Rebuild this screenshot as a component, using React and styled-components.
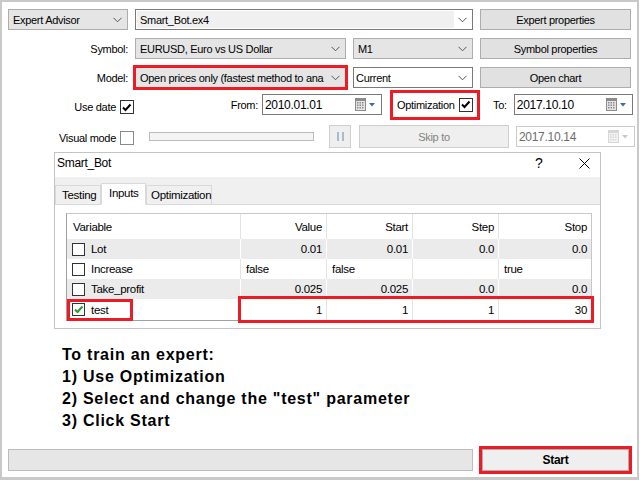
import styled, { createGlobalStyle } from "styled-components";

const RED = "#ed1c24";

const GlobalStyle = createGlobalStyle`
  body {
    margin: 0;
    background: #fff;
    font-family: "Liberation Sans", Arial, sans-serif;
    font-size: 11px;
    letter-spacing: -0.3px;
    color: #000;
  }
`;

const Window = styled.div`
  width: 639px;
  height: 480px;
  box-sizing: border-box;
  border: 2px solid #c9c9c9;
  border-bottom-width: 3px;
  background: #fff;
  padding: 7px 0 0 6px;
  display: flex;
  flex-direction: column;
`;

const Row = styled.div`
  display: flex;
  align-items: center;
  height: ${(p) => p.$h || 21}px;
  margin-top: ${(p) => p.$mt || 0}px;
`;

const Spacer = styled.div`
  flex: none;
  width: ${(p) => p.$w}px;
`;

const Label = styled.div`
  flex: none;
  width: ${(p) => p.$w}px;
  text-align: right;
  white-space: nowrap;
`;

const Combo = styled.div`
  flex: none;
  position: relative;
  box-sizing: border-box;
  width: ${(p) => p.$w}px;
  height: 21px;
  display: flex;
  align-items: center;
  padding-left: ${(p) => (p.$edit ? 2 : 4)}px;
  background: ${(p) => (p.$edit ? "#fff" : "#e5e5e5")};
  border: 1px solid ${(p) => (p.$edit ? "#7a7a7a" : "#adadad")};
  white-space: nowrap;
  ${(p) => p.$marked && `outline: 3px solid ${RED}; outline-offset: -1px;`}
`;

const ComboText = styled.div`
  flex: 1;
  margin-right: 20px;
  overflow: hidden;
  white-space: nowrap;
`;

const EditText = styled.div`
  flex: 1;
  align-self: stretch;
  margin: 1px 18px 1px -1px;
  padding-left: 3px;
  display: flex;
  align-items: center;
  background: #f0f0f0;
`;

const ChevronBox = styled.div`
  width: 20px;
  display: flex;
  justify-content: center;
  position: absolute;
  right: 0;
  top: 7px;
`;

const Button = styled.div`
  flex: none;
  box-sizing: border-box;
  width: ${(p) => p.$w}px;
  height: ${(p) => p.$h || 21}px;
  display: flex;
  align-items: center;
  justify-content: center;
  background: ${(p) => (p.$disabled || p.$bold ? "#efefef" : "#e1e1e1")};
  border: 1px solid ${(p) => (p.$disabled ? "#cfcfcf" : "#adadad")};
  color: ${(p) => (p.$disabled ? "#838383" : "#000")};
  font-weight: ${(p) => (p.$bold ? 700 : 400)};
  font-size: ${(p) => (p.$bold ? "12px" : "11px")};
  ${(p) => p.$marked && `outline: 3px solid ${RED}; outline-offset: 0;`}
`;

const CheckWrap = styled.div`
  flex: none;
  width: ${(p) => p.$w}px;
  display: flex;
  align-items: center;
  justify-content: flex-end;
  gap: 4px;
  margin-top: ${(p) => p.$dy || 0}px;
`;

const Box = styled.div`
  flex: none;
  box-sizing: border-box;
  width: ${(p) => p.$size || 14}px;
  height: ${(p) => p.$size || 14}px;
  background: #fff;
  border: 1px solid ${(p) => p.$border || "#333"};
  display: flex;
  align-items: center;
  justify-content: center;
`;

const DateField = styled.div`
  flex: none;
  box-sizing: border-box;
  width: ${(p) => p.$w}px;
  height: 21px;
  display: flex;
  align-items: center;
  padding: 0 4px 0 2px;
  background: #fff;
  border: 1px solid ${(p) => (p.$disabled ? "#cccccc" : "#7a7a7a")};
  color: ${(p) => (p.$disabled ? "#6d6d6d" : "#000")};
  font-size: 12px;
`;

const DateText = styled.div`
  flex: 1;
`;

const OptBox = styled.div`
  flex: none;
  box-sizing: border-box;
  width: 90px;
  height: 30px;
  border: 3px solid ${RED};
  display: flex;
  align-items: center;
  padding-left: 4px;
  gap: 4px;
`;

const Track = styled.div`
  flex: none;
  box-sizing: border-box;
  width: 165px;
  height: 9px;
  background: #f4f4f4;
  border: 1px solid #bcbcbc;
`;

const PauseBars = styled.div`
  display: flex;
  gap: 3px;
  span {
    width: 2px;
    height: 9px;
    background: #a9bccf;
  }
`;

/* dialog */

const Dialog = styled.div`
  margin: 4px 0 0 46px;
  width: 547px;
  height: 177px;
  box-sizing: border-box;
  border: 1px solid #c4c4c4;
  display: flex;
  flex-direction: column;
`;

const TitleBar = styled.div`
  height: 24px;
  display: flex;
  align-items: flex-start;
  padding: 3px 0 0 2px;
  box-sizing: border-box;
  font-size: 12px;
`;

const Title = styled.div`
  flex: 1;
`;

const Help = styled.div`
  width: 14px;
  margin-right: 30px;
  font-size: 14px;
  line-height: 14px;
`;

const Close = styled.div`
  width: 11px;
  margin: 2px 10px 0 0;
`;

const TabStrip = styled.div`
  height: 28px;
  background: #f0f0f0;
  border-bottom: 1px solid #d9d9d9;
  display: flex;
  align-items: flex-end;
  box-sizing: border-box;
`;

const Tab = styled.div`
  flex: none;
  box-sizing: border-box;
  width: ${(p) => p.$w}px;
  height: ${(p) => (p.$active ? 22 : 19)}px;
  padding-left: ${(p) => p.$pad}px;
  display: flex;
  align-items: ${(p) => (p.$active ? "flex-start" : "center")};
  padding-top: ${(p) => (p.$active ? 3 : 0)}px;
  background: ${(p) => (p.$active ? "#fff" : "#f0f0f0")};
  border: 1px solid #d9d9d9;
  border-bottom: ${(p) => (p.$active ? "1px solid #fff" : "none")};
  margin-bottom: ${(p) => (p.$active ? -1 : 0)}px;
  font-size: 11.5px;
`;

const Panel = styled.div`
  flex: 1;
  padding: 8px 0 0 11px;
`;

const Table = styled.div`
  width: 526px;
  box-sizing: border-box;
  border: 1px solid #a0a0a0;
  border-top-color: #c8c8c8;
  border-right-color: #c8c8c8;
  font-size: 11.5px;
`;

const TRow = styled.div`
  display: flex;
  height: ${(p) => p.$h || 20}px;
  background: ${(p) => (p.$shade ? "#ebebeb" : "#fff")};
`;

const Cell = styled.div`
  flex: none;
  box-sizing: border-box;
  width: ${(p) => p.$w}px;
  display: flex;
  align-items: center;
  justify-content: ${(p) => (p.$left ? "flex-start" : "flex-end")};
  padding: ${(p) => (p.$left ? "0 0 0 5px" : "0 4px 0 0")};
  border-right: 1px solid ${(p) => (p.$shade ? "#fff" : "#e3e3e3")};
  &:last-child {
    border-right: none;
  }
`;

const VarCell = styled.div`
  flex: none;
  box-sizing: border-box;
  width: 174px;
  display: flex;
  align-items: center;
  padding-left: ${(p) => (p.$head ? 6 : 5)}px;
  border-right: 1px solid ${(p) => (p.$shade ? "#fff" : "#e3e3e3")};
`;

const VarName = styled.div`
  display: flex;
  align-items: center;
  gap: 6px;
  height: 16px;
  padding-right: 10px;
  ${(p) => p.$marked && `outline: 3px solid ${RED}; outline-offset: 0; margin-left: -2px; padding-left: 2px; width: 48px;`}
`;

const ValueGroup = styled.div`
  display: flex;
  ${(p) => p.$marked && `outline: 3px solid ${RED}; outline-offset: 0;`}
`;

/* instructions and footer */

const Steps = styled.div`
  margin: 15px 0 0 54px;
  font-size: 16px;
  font-weight: 700;
  line-height: 22px;
  letter-spacing: 0.75px;
`;

const Footer = styled.div`
  display: flex;
  align-items: center;
  margin-top: 17px;
  gap: 9px;
`;

const Progress = styled.div`
  box-sizing: border-box;
  width: 465px;
  height: 22px;
  background: #e6e6e6;
  border: 1px solid #bcbcbc;
`;

function Chevron({ color = "#555" }) {
  return (
    <svg width="9" height="6" viewBox="0 0 9 6">
      <path d="M0.5 0.8 L4.5 4.8 L8.5 0.8" fill="none" stroke={color} strokeWidth="1" />
    </svg>
  );
}

function Tick({ color = "#000" }) {
  return (
    <svg width="10" height="9" viewBox="0 0 10 9">
      <path d="M1 4.5 L3.5 7 L8.5 1.5" fill="none" stroke={color} strokeWidth="2" />
    </svg>
  );
}

function Calendar({ disabled }) {
  const grid = disabled ? "#d6d6d6" : "#8c8c8c";
  const arrow = disabled ? "#c8c8c8" : "#3b6db0";
  return (
    <svg width="22" height="13" viewBox="0 0 22 13">
      <rect x="0.5" y="0.5" width="10" height="12" fill={disabled ? "#f4f4f4" : "#e4e4e4"} stroke={grid} />
      <rect x="1" y="1" width="9" height="2" fill={grid} />
      {[4, 6.5, 9].map((y) =>
        [2, 4.5, 7].map((x) => <rect key={`${x}-${y}`} x={x} y={y} width="1.5" height="1.5" fill={grid} />)
      )}
      <path d="M14 5 L20 5 L17 8.5 Z" fill={arrow} />
    </svg>
  );
}

function CloseIcon() {
  return (
    <svg width="11" height="11" viewBox="0 0 11 11">
      <path d="M0.5 0.5 L10.5 10.5 M10.5 0.5 L0.5 10.5" stroke="#000" strokeWidth="1" />
    </svg>
  );
}

const inputs = [
  { name: "Lot", value: "0.01", start: "0.01", step: "0.0", stop: "0.0" },
  { name: "Increase", value: "false", start: "false", step: "", stop: "true", text: true },
  { name: "Take_profit", value: "0.025", start: "0.025", step: "0.0", stop: "0.0" },
  { name: "test", value: "1", start: "1", step: "1", stop: "30", on: true },
];

export default function App() {
  return (
    <>
      <GlobalStyle />
      <Window>
        <Row>
          <Combo $w={120}>
            <ComboText>Expert Advisor</ComboText>
            <ChevronBox><Chevron /></ChevronBox>
          </Combo>
          <Spacer $w={7} />
          <Combo $w={338} $edit>
            <EditText>Smart_Bot.ex4</EditText>
            <ChevronBox><Chevron /></ChevronBox>
          </Combo>
          <Spacer $w={7} />
          <Button $w={151}>Expert properties</Button>
        </Row>

        <Row $mt={8}>
          <Label $w={120}>Symbol:</Label>
          <Spacer $w={7} />
          <Combo $w={211}>
            <ComboText>EURUSD, Euro vs US Dollar</ComboText>
            <ChevronBox><Chevron /></ChevronBox>
          </Combo>
          <Spacer $w={7} />
          <Combo $w={120}>
            <ComboText>M1</ComboText>
            <ChevronBox><Chevron /></ChevronBox>
          </Combo>
          <Spacer $w={7} />
          <Button $w={151}>Symbol properties</Button>
        </Row>

        <Row $mt={8}>
          <Label $w={120}>Model:</Label>
          <Spacer $w={7} />
          <Combo $w={211} $marked>
            <ComboText>Open prices only (fastest method to ana</ComboText>
            <ChevronBox><Chevron /></ChevronBox>
          </Combo>
          <Spacer $w={7} />
          <Combo $w={120} $edit>
            <ComboText>Current</ComboText>
            <ChevronBox><Chevron /></ChevronBox>
          </Combo>
          <Spacer $w={7} />
          <Button $w={151}>Open chart</Button>
        </Row>

        <Row $mt={1} $h={31}>
          <CheckWrap $w={126} $dy={5}>
            <span>Use date</span>
            <Box><Tick /></Box>
          </CheckWrap>
          <Label $w={124}>From:</Label>
          <Spacer $w={4} />
          <DateField $w={120}>
            <DateText>2010.01.01</DateText>
            <Calendar />
          </DateField>
          <Spacer $w={8} />
          <OptBox>
            <span>Optimization</span>
            <Box><Tick /></Box>
          </OptBox>
          <Spacer $w={13} />
          <span>To:</span>
          <Spacer $w={7} />
          <DateField $w={119}>
            <DateText>2017.10.10</DateText>
            <Calendar />
          </DateField>
        </Row>

        <Row $mt={5} $h={23}>
          <CheckWrap $w={126} $dy={2}>
            <span>Visual mode</span>
            <Box $border="#8a8a8a" />
          </CheckWrap>
          <Spacer $w={15} />
          <Track />
          <Spacer $w={15} />
          <Button $w={22} $h={23} $disabled>
            <PauseBars><span /><span /></PauseBars>
          </Button>
          <Spacer $w={8} />
          <Button $w={150} $h={23} $disabled>Skip to</Button>
          <Spacer $w={7} />
          <DateField $w={119} $disabled>
            <DateText>2017.10.14</DateText>
            <Calendar disabled />
          </DateField>
        </Row>

        <Dialog>
          <TitleBar>
            <Title>Smart_Bot</Title>
            <Help>?</Help>
            <Close><CloseIcon /></Close>
          </TitleBar>
          <TabStrip>
            <Tab $w={46} $pad={6}>Testing</Tab>
            <Tab $w={45} $pad={7} $active>Inputs</Tab>
            <Tab $w={66} $pad={4}>Optimization</Tab>
          </TabStrip>
          <Panel>
            <Table>
              <TRow $h={25}>
                <VarCell $head>Variable</VarCell>
                <ValueGroup>
                  <Cell $w={86}>Value</Cell>
                  <Cell $w={86}>Start</Cell>
                  <Cell $w={86}>Step</Cell>
                  <Cell $w={92}>Stop</Cell>
                </ValueGroup>
              </TRow>
              {inputs.map((v, i) => {
                const shade = i % 2 === 0;
                return (
                  <TRow key={v.name} $shade={shade} $h={v.on ? 21 : 20}>
                    <VarCell $shade={shade}>
                      <VarName $marked={v.on}>
                        <Box $size={13}>{v.on && <Tick color="#2f9a2f" />}</Box>
                        <span>{v.name}</span>
                      </VarName>
                    </VarCell>
                    <ValueGroup $marked={v.on}>
                      <Cell $w={86} $shade={shade} $left={v.text}>{v.value}</Cell>
                      <Cell $w={86} $shade={shade} $left={v.text}>{v.start}</Cell>
                      <Cell $w={86} $shade={shade} $left={v.text}>{v.step}</Cell>
                      <Cell $w={92} $shade={shade} $left={v.text}>{v.stop}</Cell>
                    </ValueGroup>
                  </TRow>
                );
              })}
            </Table>
          </Panel>
        </Dialog>

        <Steps>
          <div>To train an expert:</div>
          <div>1) Use Optimization</div>
          <div>2) Select and change the "test" parameter</div>
          <div>3) Click Start</div>
        </Steps>

        <Footer>
          <Progress />
          <Button $w={147} $h={22} $bold $marked>Start</Button>
        </Footer>
      </Window>
    </>
  );
}
